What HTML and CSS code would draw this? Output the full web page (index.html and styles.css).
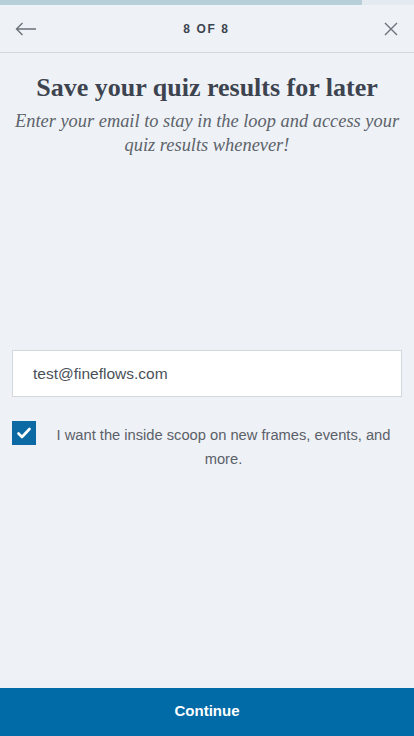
FILE: index.html
```html
<!DOCTYPE html>
<html>
<head>
<meta charset="utf-8">
<link rel="stylesheet" href="styles.css">
</head>
<body>
<div class="page">
  <div class="progress"><div class="progress-fill"></div></div>
  <header class="topbar">
    <button class="icon-btn" aria-label="Back">
      <svg width="22" height="14" viewBox="0 0 22 14"><path d="M21 7H1.5M7.5 1L1.5 7l6 6" fill="none" stroke="#6b7079" stroke-width="1.4"/></svg>
    </button>
    <div class="step">8 OF 8</div>
    <button class="icon-btn" aria-label="Close">
      <svg width="14" height="14" viewBox="0 0 14 14"><path d="M1 1l12 12M13 1L1 13" fill="none" stroke="#6b7079" stroke-width="1.4"/></svg>
    </button>
  </header>
  <main class="content">
    <h1 class="title">Save your quiz results for later</h1>
    <p class="subtitle">Enter your email to stay in the loop and access your quiz results whenever!</p>
    <div class="form">
      <div class="input">test@fineflows.com</div>
      <label class="check-row">
        <span class="checkbox">
          <svg width="14" height="12" viewBox="0 0 14 12"><path d="M1.5 6.5l3.5 3.5 7.5-8" fill="none" stroke="#fff" stroke-width="2.6" stroke-linecap="round" stroke-linejoin="round"/></svg>
        </span>
        <span class="check-text">I want the inside scoop on new frames, events, and more.</span>
      </label>
    </div>
  </main>
  <button class="continue">Continue</button>
</div>
</body>
</html>
```
FILE: styles.css
```css
* { box-sizing: border-box; }
html, body { margin: 0; padding: 0; }
body { background: #eef2f6; font-family: "Liberation Sans", Arial, sans-serif; color: #3d4450; }
.page { width: 414px; height: 736px; display: flex; flex-direction: column; }
.progress { height: 5px; background: #e3ebf1; }
.progress-fill { width: 362px; height: 5px; background: #b6cfd9; }
.topbar { height: 48px; display: flex; align-items: center; justify-content: space-between; padding: 0 16px 0 15px; border-bottom: 1px solid #d3d8dd; }
.icon-btn { background: none; border: 0; padding: 0; width: 24px; height: 24px; display: flex; align-items: center; justify-content: center; }
.icon-btn:first-child { justify-content: flex-start; }
.icon-btn:last-child { justify-content: flex-end; }
.step { font-size: 12px; font-weight: bold; letter-spacing: 1.6px; color: #3d4450; }
.content { flex: 1; display: flex; flex-direction: column; align-items: center; padding: 19px 10px 0; }
.title { margin: 0; font-family: "Liberation Serif", "Times New Roman", serif; font-weight: bold; font-size: 26px; line-height: 32px; color: #3d4450; white-space: nowrap; }
.subtitle { margin: 5px 0 0; font-family: "Liberation Serif", "Times New Roman", serif; font-style: italic; font-size: 18.4px; line-height: 24px; text-align: center; color: #5d626b; }
.form { width: 100%; padding: 0 2px; margin-top: 193px; }
.input { height: 47px; background: #fff; border: 1px solid #d3d8dd; padding: 0 20px; display: flex; align-items: center; font-size: 15.5px; color: #4a5059; }
.check-row { display: flex; align-items: flex-start; margin-top: 24px; }
.checkbox { width: 24px; height: 24px; flex: none; background: #0b6aa3; display: flex; align-items: center; justify-content: center; }
.check-text { flex: 1; font-size: 14.7px; line-height: 24px; text-align: center; color: #5b6069; padding: 2px 0 0 9px; }
.continue { height: 48px; border: 0; background: #006ba6; color: #fff; font-family: "Liberation Sans", Arial, sans-serif; font-weight: bold; font-size: 15px; width: 100%; padding-bottom: 4px; }
```
